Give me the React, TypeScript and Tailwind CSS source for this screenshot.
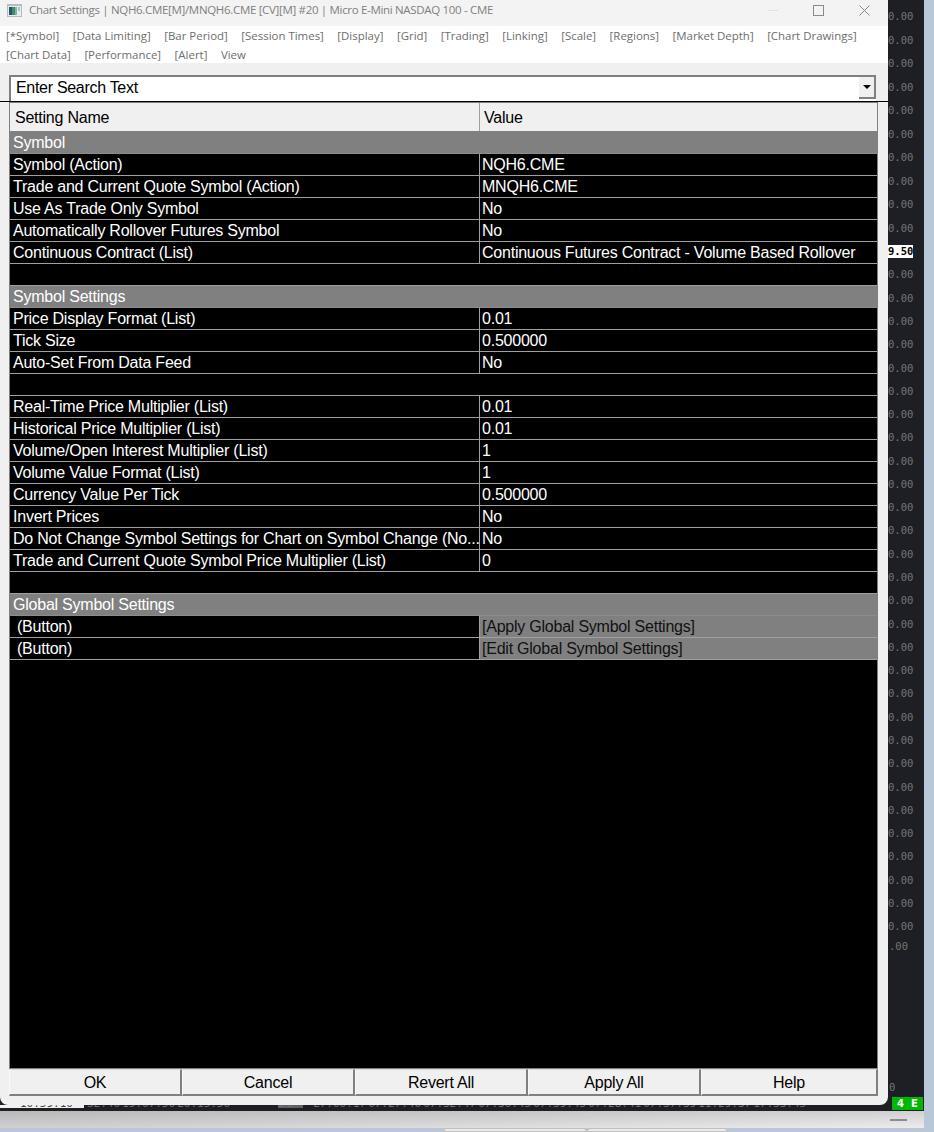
const menuRow1 = [
  "[*Symbol]",
  "[Data Limiting]",
  "[Bar Period]",
  "[Session Times]",
  "[Display]",
  "[Grid]",
  "[Trading]",
  "[Linking]",
  "[Scale]",
  "[Regions]",
  "[Market Depth]",
  "[Chart Drawings]",
];
const menuRow2 = ["[Chart Data]", "[Performance]", "[Alert]", "View"];

type Row = {
  kind: "section" | "row" | "empty" | "button";
  name?: string;
  value?: string;
};

const rows: Row[] = [
  { kind: "section", name: "Symbol" },
  { kind: "row", name: "Symbol (Action)", value: "NQH6.CME" },
  { kind: "row", name: "Trade and Current Quote Symbol (Action)", value: "MNQH6.CME" },
  { kind: "row", name: "Use As Trade Only Symbol", value: "No" },
  { kind: "row", name: "Automatically Rollover Futures Symbol", value: "No" },
  { kind: "row", name: "Continuous Contract (List)", value: "Continuous Futures Contract - Volume Based Rollover" },
  { kind: "empty" },
  { kind: "section", name: "Symbol Settings" },
  { kind: "row", name: "Price Display Format (List)", value: "0.01" },
  { kind: "row", name: "Tick Size", value: "0.500000" },
  { kind: "row", name: "Auto-Set From Data Feed", value: "No" },
  { kind: "empty" },
  { kind: "row", name: "Real-Time Price Multiplier (List)", value: "0.01" },
  { kind: "row", name: "Historical Price Multiplier (List)", value: "0.01" },
  { kind: "row", name: "Volume/Open Interest Multiplier (List)", value: "1" },
  { kind: "row", name: "Volume Value Format (List)", value: "1" },
  { kind: "row", name: "Currency Value Per Tick", value: "0.500000" },
  { kind: "row", name: "Invert Prices", value: "No" },
  { kind: "row", name: "Do Not Change Symbol Settings for Chart on Symbol Change (No...", value: "No" },
  { kind: "row", name: "Trade and Current Quote Symbol Price Multiplier (List)", value: "0" },
  { kind: "empty" },
  { kind: "section", name: "Global Symbol Settings" },
  { kind: "button", name: "(Button)", value: "[Apply Global Symbol Settings]" },
  { kind: "button", name: "(Button)", value: "[Edit Global Symbol Settings]" },
];

const footerButtons = [
  { label: "OK", width: "w-[173px]" },
  { label: "Cancel", width: "w-[173px]" },
  { label: "Revert All", width: "w-[173px]" },
  { label: "Apply All", width: "w-[173px]" },
  { label: "Help", width: "flex-1" },
];

const SANS = "font-['Liberation_Sans',Arial,sans-serif]";

const SettingRow = ({ row }: { row: Row }) => {
  if (row.kind === "section") {
    return (
      <div className="h-[22px] bg-[#808080] border-b border-[#8c8c8c] pl-[3px] text-[16px] leading-[21px] text-white">
        {row.name}
      </div>
    );
  }
  if (row.kind === "empty") {
    return <div className="h-[22px] border-b border-[#a0a0a0] bg-black" />;
  }
  const isButton = row.kind === "button";
  return (
    <div className="flex h-[22px] border-b border-[#a0a0a0] text-[16px] leading-[21px] text-white">
      <div className={`w-[469px] shrink-0 whitespace-nowrap overflow-hidden ${isButton ? "pl-[7px]" : "pl-[3px]"}`}>
        {row.name}
      </div>
      <div
        className={`flex-1 whitespace-nowrap border-l border-[#a0a0a0] pl-[2px] ${
          isButton ? "bg-[#808080] text-[#111111]" : ""
        }`}
      >
        {row.value}
      </div>
    </div>
  );
};

const PriceColumn = () => {
  const labels = Array.from({ length: 40 }, (_, i) => i);
  return (
    <div className="w-[36px] shrink-0 overflow-hidden bg-[#1e1f24] pt-[5px] font-['DejaVu_Sans_Mono',monospace] text-[10.5px] tracking-normal text-[#757575]">
      {labels.map((i) =>
        i === 10 ? (
          <div key={i} className="my-[5.2px] h-[13px] w-[25px] bg-white text-[10.5px] font-bold leading-[13px] text-black">
            9.50
          </div>
        ) : (
          <div key={i} className={`whitespace-nowrap ${i < 10 ? "leading-[23.5px]" : "leading-[23.28px]"}`}>
            0.00
          </div>
        ),
      )}
      <div className="-mt-[4px] whitespace-nowrap pl-[1px] leading-[23.28px]">.00</div>
      <div className="mt-[118px] pl-[1px] leading-[23.28px]">0</div>
    </div>
  );
};

export default function App() {
  return (
    <div className={`relative flex h-[1132px] w-[934px] flex-col overflow-hidden bg-[#b9c8d8] tracking-[-0.23px] ${SANS}`}>
      <div className="flex h-[1105px] shrink-0 bg-[#1e1f24]">
        <div className="flex w-[888px] shrink-0 flex-col overflow-hidden rounded-b-[8px] bg-[#f0f0f0]">
          {/* title bar */}
          <div className="flex h-[26px] shrink-0 items-center bg-[#f3f3f3] pb-[6px] pl-[7px]">
            <svg width="15" height="13" viewBox="0 0 15 13" className="shrink-0">
              <rect width="15" height="13" fill="#b4bcc2" />
              <rect x="1" y="2" width="13" height="10" fill="#e6edf2" />
              <rect x="2" y="3" width="3" height="8" fill="#24566b" />
              <rect x="5" y="3" width="3" height="8" fill="#3f8a6a" />
              <rect x="8" y="3" width="2" height="8" fill="#7fb5a0" />
              <rect x="11" y="3" width="2" height="4" fill="#a8c4d4" />
            </svg>
            <span className="ml-[7px] whitespace-nowrap font-['Open_Sans',sans-serif] text-[11.5px] tracking-[-0.32px] text-[#808080]">
              Chart Settings | NQH6.CME[M]/MNQH6.CME [CV][M] #20 | Micro E-Mini NASDAQ 100 - CME
            </span>
            <div className="ml-auto flex items-center">
              <div className="h-px w-[10px] bg-[#e2e2e2]" />
              <svg width="11" height="11" viewBox="0 0 11 11" className="ml-[35px]">
                <rect x="0.5" y="0.5" width="10" height="10" fill="none" stroke="#8a8a8a" />
              </svg>
              <svg width="11" height="11" viewBox="0 0 11 11" className="ml-[35px] mr-[18px]">
                <path d="M0.5 0.5L10.5 10.5M10.5 0.5L0.5 10.5" stroke="#8a8a8a" strokeWidth="1" fill="none" />
              </svg>
            </div>
          </div>

          {/* tab links */}
          <div className="h-[37px] shrink-0 bg-white pl-[6px] font-['Open_Sans',sans-serif] text-[11.45px] leading-[19px] tracking-normal text-[#6d6d6d]">
            <div className="flex gap-[13.5px] whitespace-nowrap">
              {menuRow1.map((m) => (
                <span key={m}>{m}</span>
              ))}
            </div>
            <div className="flex gap-[13.5px] whitespace-nowrap">
              {menuRow2.map((m) => (
                <span key={m}>{m}</span>
              ))}
            </div>
          </div>

          {/* search combo */}
          <div className="h-[12px] shrink-0" />
          <div className="ml-[9px] flex h-[26px] w-[867px] shrink-0 items-center border-t-2 border-l-2 border-[#808080] bg-white pl-[5px] text-[16px] tracking-[-0.3px] text-black">
            <span className="pb-[3px]">Enter Search Text</span>
            <div className="mb-[2px] ml-auto flex h-[22px] w-[17px] items-center justify-center border-b-2 border-r-2 border-[#808080] bg-[#f0f0f0]">
              <div className="h-0 w-0 border-x-[4px] border-t-[4px] border-x-transparent border-t-black" />
            </div>
          </div>
          <div className="h-px shrink-0 bg-black" />

          {/* grid */}
          <div className="mx-[9px] flex h-[967px] w-[869px] shrink-0 flex-col border border-[#808080] bg-black">
            <div className="flex h-[29px] shrink-0 border-b border-[#808080] bg-[#f0f0f0] text-[16px] leading-[29px] text-black">
              <div className="w-[469px] shrink-0 pl-[5px]">Setting Name</div>
              <div className="flex-1 border-l border-[#a0a0a0] pl-[4px]">Value</div>
            </div>
            {rows.map((row, i) => (
              <SettingRow key={i} row={row} />
            ))}
          </div>

          {/* footer buttons */}
          <div className="ml-[9px] flex h-[27px] w-[869px] shrink-0">
            {footerButtons.map((b) => (
              <div
                key={b.label}
                className={`${b.width} flex items-center justify-center border-t border-l border-b-2 border-r-2 border-t-[#dcdcdc] border-l-[#f8f8f8] border-b-[#808080] border-r-[#808080] bg-[#f0f0f0] pt-[2px] text-[16px] text-black`}
              >
                {b.label}
              </div>
            ))}
          </div>
        </div>
        <PriceColumn />
        <div className="w-[10px] shrink-0 bg-[#b9c8d8]" />
      </div>

      {/* chart time axis, mostly behind the dialog */}
      <div className="flex h-[6px] w-[924px] shrink-0 overflow-hidden bg-[#1e1f24] font-['DejaVu_Sans_Mono',monospace] text-[11px] leading-[6px] tracking-normal text-[#6e6e6e] [word-spacing:-4.6px]">
        <div className="-mt-[4px] h-[7px] w-[84px] shrink-0 whitespace-nowrap bg-[#f0f0f0] pl-[20px] text-[#444444]">10:59:10</div>
        <span className="-mt-[4px] whitespace-nowrap pl-[3px]">32:40 19:07:50 20:15:50</span>
        <span className="-mt-[4px] ml-[48px] h-[7px] w-[25px] whitespace-nowrap bg-[#606060]">2 2</span>
        <span className="-mt-[4px] ml-[10px] whitespace-nowrap">27:00:17 07:27:40 07:32:47 07:36:45 07:39:45 07:28:41 07:37:39 11:29:37 17:33:45</span>
      </div>

      {/* taskbar strip */}
      <div className="flex h-[17px] w-[924px] shrink-0 items-center justify-end bg-gradient-to-br from-[#b8b8b8] via-[#d0d0d0] to-[#ececec] pr-[17px]">
        <div className="h-[2px] w-[17px] bg-[#8c8c8c]" />
      </div>
      <div className="flex flex-1 pl-[443px]">
        <div className="h-full w-[144px] rounded-t-[6px] border border-[#c0c0c0] bg-[#ececec]" />
        <div className="h-full w-[141px] rounded-t-[6px] border border-[#c0c0c0] bg-[#ececec]" />
      </div>

      {/* status badge sits over the chart corner */}
      <div className="absolute left-[892px] top-[1097px] flex h-[13px] w-[31px] items-center justify-center gap-[7px] bg-[#00b800] font-['DejaVu_Sans',sans-serif] text-[10px] font-bold tracking-normal text-white">
        <span>4</span>
        <span>E</span>
      </div>
    </div>
  );
}
